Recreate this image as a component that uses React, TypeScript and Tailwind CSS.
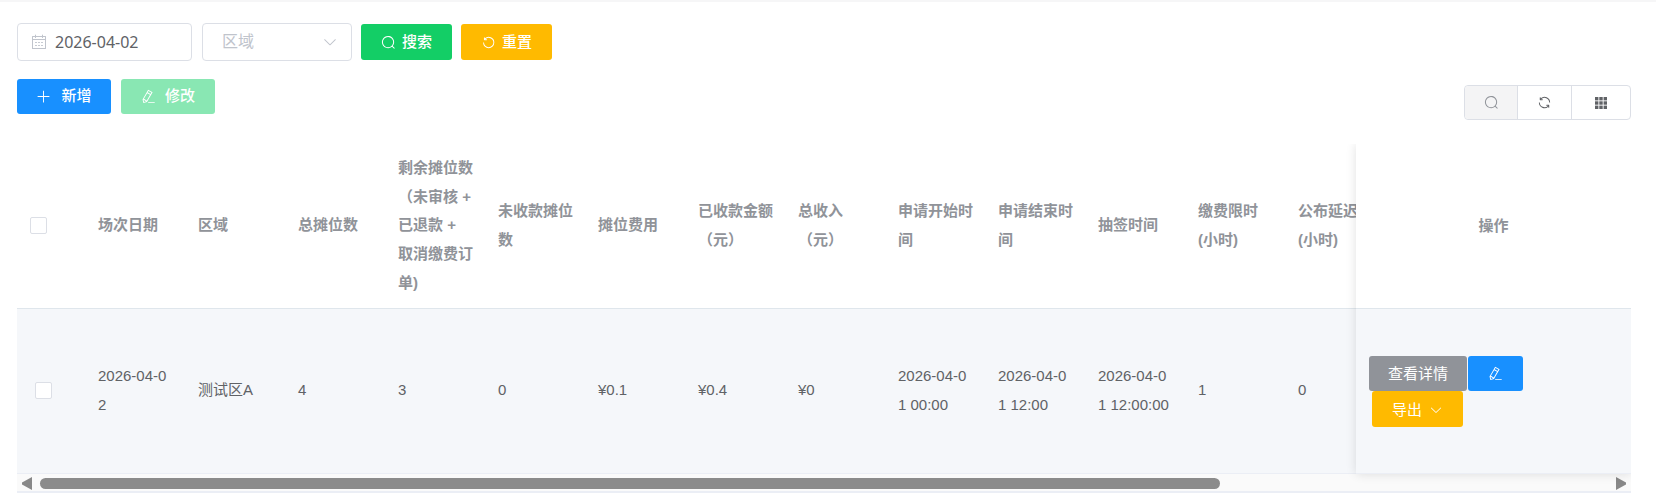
const FONT = "font-['Liberation_Sans','Noto_Sans_CJK_SC',sans-serif]";

const paths = {
  search: 'm795.904 750.72 124.992 124.928a32 32 0 0 1-45.248 45.248L750.656 795.904a416 416 0 1 1 45.248-45.248zM480 832a352 352 0 1 0 0-704 352 352 0 0 0 0 704z',
  refreshLeft: 'M289.088 296.704h92.992a32 32 0 0 1 0 64H232.96a32 32 0 0 1-32-32V179.712a32 32 0 0 1 64 0v50.56a384 384 0 0 1 643.84 282.88 384 384 0 0 1-383.936 384 384 384 0 0 1-384-384h64a320 320 0 1 0 640 0 320 320 0 0 0-555.712-216.448z',
  refresh: 'M771.776 794.88A384 384 0 0 1 128 512h64a320 320 0 0 0 555.712 216.448H654.72a32 32 0 1 1 0-64h149.056a32 32 0 0 1 32 32v148.928a32 32 0 1 1-64 0v-50.56zM276.288 295.616h92.992a32 32 0 0 1 0 64H220.16a32 32 0 0 1-32-32V178.56a32 32 0 0 1 64 0v50.56A384 384 0 0 1 896.128 512h-64a320 320 0 0 0-555.776-216.384z',
  plus: 'M480 480V128a32 32 0 0 1 64 0v352h352a32 32 0 0 1 0 64H544v352a32 32 0 1 1-64 0V544H128a32 32 0 0 1 0-64z',
  arrowDown: 'M831.872 340.864 512 652.672 192.128 340.864a30.592 30.592 0 0 0-42.752 0 29.12 29.12 0 0 0 0 41.6L489.664 714.24a32 32 0 0 0 44.672 0l340.288-331.712a29.12 29.12 0 0 0 0-41.728 30.592 30.592 0 0 0-42.752 0z',
  editPen: 'm199.04 672.64 193.984 112 224-387.968-193.92-112-224 388.032zm-23.872 60.16 32.896 148.288 144.896-45.696L175.168 732.8zM455.04 229.248l193.92 112 56.704-98.112-193.984-112-56.64 98.112zM104.32 708.8l384-665.024 304.768 175.936L409.152 884.8h.064l-248.448 78.336L104.32 708.8zm384 254.272v-64h448v64h-448z',
  calendar: 'M128 384v512h768V192H768v32a32 32 0 1 1-64 0v-32H320v32a32 32 0 0 1-64 0v-32H128v128h768v64H128zm192-256h384V64a32 32 0 1 1 64 0v64h160a32 32 0 0 1 32 32v768a32 32 0 0 1-32 32H96a32 32 0 0 1-32-32V160a32 32 0 0 1 32-32h160V64a32 32 0 0 1 64 0v64zm-32 384h64a32 32 0 0 1 0 64h-64a32 32 0 0 1 0-64zm0 192h64a32 32 0 1 1 0 64h-64a32 32 0 1 1 0-64zm192-192h64a32 32 0 0 1 0 64h-64a32 32 0 0 1 0-64zm0 192h64a32 32 0 1 1 0 64h-64a32 32 0 1 1 0-64zm192-192h64a32 32 0 1 1 0 64h-64a32 32 0 1 1 0-64zm0 192h64a32 32 0 1 1 0 64h-64a32 32 0 1 1 0-64z',
};

function Icon({ d, className }: { d: string; className: string }) {
  return (
    <svg viewBox="0 0 1024 1024" fill="currentColor" className={className}>
      <path d={d} />
    </svg>
  );
}

function Checkbox() {
  return <span className="block w-[17px] h-[17px] rounded-[2px] border border-[#dcdfe6] bg-white" />;
}

const headers = [
  '场次日期',
  '区域',
  '总摊位数',
  '剩余摊位数（未审核 + 已退款 + 取消缴费订单)',
  '未收款摊位数',
  '摊位费用',
  '已收款金额（元）',
  '总收入（元）',
  '申请开始时间',
  '申请结束时间',
  '抽签时间',
  '缴费限时(小时)',
  '公布延迟(小时)',
];

const row = [
  '2026-04-02',
  '测试区A',
  '4',
  '3',
  '0',
  '¥0.1',
  '¥0.4',
  '¥0',
  '2026-04-01 00:00',
  '2026-04-01 12:00',
  '2026-04-01 12:00:00',
  '1',
  '0',
];

export default function App() {
  return (
    <div className={`${FONT} w-[1656px] h-[504px] overflow-hidden bg-white text-[15px] text-[#606266]`}>
      <div className="h-[2px] bg-[#f6f6f7]" />
      <div className="pl-[17px] pr-[25px] pt-[21px]">
        {/* Search form */}
        <div className="flex items-center h-[38px]">
          <div className="flex items-center w-[175px] h-[38px] rounded-[4px] border border-[#dcdfe6] pl-[13px]">
            <Icon d={paths.calendar} className="w-[16px] h-[16px] text-[#c0c4cc]" />
            <span className="ml-[8px] text-[16px] font-['Noto_Sans',sans-serif]">2026-04-02</span>
          </div>
          <div className="flex items-center justify-between w-[150px] h-[38px] ml-[10px] rounded-[4px] border border-[#dcdfe6] pl-[19px] pr-[13px]">
            <span className="text-[16px] text-[#c0c4cc]">区域</span>
            <Icon d={paths.arrowDown} className="w-[16px] h-[16px] text-[#c0c4cc]" />
          </div>
          <button className="flex items-center justify-center gap-[6px] w-[91px] h-[36px] ml-[9px] rounded-[3px] bg-[#13ce66] text-white font-medium">
            <Icon d={paths.search} className="w-[15px] h-[15px]" />
            <span>搜索</span>
          </button>
          <button className="flex items-center justify-center gap-[6px] w-[91px] h-[36px] ml-[9px] rounded-[3px] bg-[#ffba00] text-white font-medium">
            <Icon d={paths.refreshLeft} className="w-[15px] h-[15px]" />
            <span>重置</span>
          </button>
        </div>

        {/* Actions and table tools */}
        <div className="flex justify-between items-start mt-[18px] mb-[24px]">
          <div className="flex gap-[10px]">
            <button className="flex items-center justify-center gap-[10px] w-[94px] h-[35px] rounded-[3px] bg-[#1890ff] text-white font-medium">
              <Icon d={paths.plus} className="w-[15px] h-[15px]" />
              <span>新增</span>
            </button>
            <button className="flex items-center justify-center gap-[9px] w-[94px] h-[35px] rounded-[3px] bg-[#89e7b3] text-white font-medium">
              <Icon d={paths.editPen} className="w-[15px] h-[15px]" />
              <span>修改</span>
            </button>
          </div>
          <div className="flex h-[35px] mt-[6px] w-[167px] rounded-[4px] border border-[#dcdfe6]">
            <div className="flex items-center justify-center w-[53px] bg-[#f4f4f5] border-r border-[#dcdfe6] rounded-l-[4px]">
              <Icon d={paths.search} className="w-[15px] h-[15px] text-[#909399]" />
            </div>
            <div className="flex items-center justify-center w-[54px] border-r border-[#dcdfe6]">
              <Icon d={paths.refresh} className="w-[15px] h-[15px] text-[#606266]" />
            </div>
            <div className="flex items-center justify-center flex-1">
              <svg viewBox="0 0 12 12" fill="#606266" className="w-[12px] h-[12px]">
                <rect x="0" y="0" width="3.4" height="3.4" />
                <rect x="4.3" y="0" width="3.4" height="3.4" />
                <rect x="8.6" y="0" width="3.4" height="3.4" />
                <rect x="0" y="4.3" width="3.4" height="3.4" />
                <rect x="4.3" y="4.3" width="3.4" height="3.4" />
                <rect x="8.6" y="4.3" width="3.4" height="3.4" />
                <rect x="0" y="8.6" width="3.4" height="3.4" />
                <rect x="4.3" y="8.6" width="3.4" height="3.4" />
                <rect x="8.6" y="8.6" width="3.4" height="3.4" />
              </svg>
            </div>
          </div>
        </div>

        {/* Table */}
        <div className="border-b-2 border-[#ebeef5] overflow-hidden">
          <div className="flex">
            <div className="w-[1339px] overflow-hidden">
              <table className="table-fixed w-[1371px] border-collapse leading-[28.8px]">
                <colgroup>
                  <col className="w-[71px]" />
                  {headers.map((h) => (
                    <col key={h} className="w-[100px]" />
                  ))}
                </colgroup>
                <thead>
                  <tr className="h-[164px] border-b border-[#dfe6ec]">
                    <th className="pl-[13px] text-left">
                      <Checkbox />
                    </th>
                    {headers.map((h) => (
                      <th key={h} className="pl-[10px] pr-[14px] text-left align-middle font-bold text-[#909399] break-all">
                        {h}
                      </th>
                    ))}
                  </tr>
                </thead>
                <tbody>
                  <tr className="h-[165px] bg-[#f5f7fa] border-b border-[#ebeef5]">
                    <td className="pl-[18px]">
                      <Checkbox />
                    </td>
                    {row.map((c, i) => (
                      <td key={i} className="pl-[10px] pr-[14px] align-middle break-all">
                        {c}
                      </td>
                    ))}
                  </tr>
                </tbody>
              </table>
            </div>

            {/* Fixed action column */}
            <div className="relative w-[275px] h-[330px] shadow-[0_0_10px_rgba(0,0,0,0.12)]">
              <div className="flex items-center justify-center h-[165px] bg-white border-b border-[#dfe6ec] font-bold text-[#909399]">
                操作
              </div>
              <div className="flex flex-col justify-center h-[165px] pl-[13px] bg-[#f5f7fa] border-b border-[#ebeef5]">
                <div className="flex gap-px">
                  <button className="w-[98px] h-[35px] pt-[3px] rounded-[3px] bg-[#909399] text-white">查看详情</button>
                  <button className="flex items-center justify-center w-[55px] h-[35px] rounded-[3px] bg-[#1890ff] text-white">
                    <Icon d={paths.editPen} className="w-[15px] h-[15px]" />
                  </button>
                </div>
                <button className="flex items-center justify-center gap-[7px] w-[91px] h-[36px] pt-[3px] ml-[3px] rounded-[3px] bg-[#ffba00] text-white">
                  <span>导出</span>
                  <Icon d={paths.arrowDown} className="w-[14px] h-[14px]" />
                </button>
              </div>
            </div>
          </div>

          {/* Horizontal scrollbar */}
          <div className="flex items-center h-[17px] pt-[2px] bg-[#fafafa]">
            <svg viewBox="0 0 10 13" fill="#888888" className="ml-[5px] w-[10px] h-[13px]">
              <path d="M10 0v13L0 7.6V5.4z" />
            </svg>
            <span className="ml-[8px] w-[1180px] h-[11px] rounded-full bg-[#8b8b8b]" />
            <svg viewBox="0 0 10 13" fill="#888888" className="ml-auto mr-[5px] w-[10px] h-[13px]">
              <path d="M0 0v13l10-5.4V5.4z" />
            </svg>
          </div>
        </div>
      </div>
    </div>
  );
}
